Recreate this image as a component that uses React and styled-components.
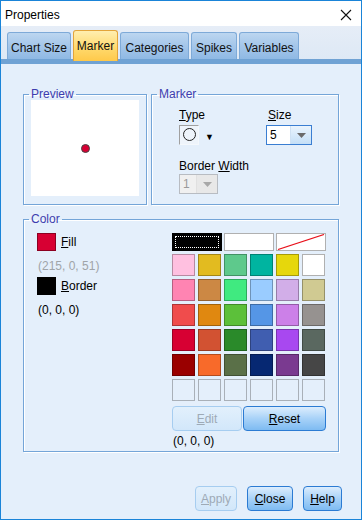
import styled, { createGlobalStyle } from "styled-components";

const GlobalStyle = createGlobalStyle`
  html, body {
    margin: 0;
    padding: 0;
    background: #ffffff;
  }
  body {
    font-family: "Liberation Sans", Arial, sans-serif;
    font-size: 12px;
    color: #000;
  }
`;

const tabs = [
  { label: "Chart Size", width: 64 },
  { label: "Marker", width: 45 },
  { label: "Categories", width: 69 },
  { label: "Spikes", width: 46 },
  { label: "Variables", width: 60 },
];

const palette = [
  "#ffc0e0", "#e2bb20", "#5ec98c", "#00b4a0", "#e6d70c", "#ffffff",
  "#ff84b2", "#cc8844", "#40ea80", "#9accff", "#d2aee8", "#d0ca92",
  "#f04c4c", "#e08810", "#5cc03a", "#5596e6", "#cc80e8", "#969290",
  "#d70033", "#d25232", "#2a8a2a", "#405eb0", "#a848f0", "#5a6860",
  "#9a0000", "#f86a2a", "#5a7048", "#062872", "#7a3a90", "#464646",
  null, null, null, null, null, null,
];

const App = () => {
  return (
    <>
      <GlobalStyle />
      <Window>
        <TitleBar>
          <Title>Properties</Title>
          <CloseIcon width="12" height="12" viewBox="0 0 12 12">
            <path d="M1 1 L11 11 M11 1 L1 11" stroke="#111" strokeWidth="1.1" />
          </CloseIcon>
        </TitleBar>

        <TabStrip>
          <TabRow>
            {tabs.map((t) => (
              <Tab key={t.label} $width={t.width} $active={t.label === "Marker"}>
                {t.label}
              </Tab>
            ))}
          </TabRow>
          <TabBar />
        </TabStrip>

        <Content>
          <TopRow>
            <PreviewBox>
              <Legend>Preview</Legend>
              <PreviewCanvas>
                <Dot />
              </PreviewCanvas>
            </PreviewBox>

            <MarkerBox>
              <Legend>Marker</Legend>
              <MarkerGrid>
                <FieldLabel><u>T</u>ype</FieldLabel>
                <FieldLabel $shift><u>S</u>ize</FieldLabel>
                <TypePicker>
                  <TypeBox>
                    <Circle />
                  </TypeBox>
                  <SmallArrow>▼</SmallArrow>
                </TypePicker>
                <Combo $width={46} $focused>
                  <ComboValue>5</ComboValue>
                  <ComboButton>
                    <svg width="9" height="5" viewBox="0 0 9 5">
                      <path d="M0 0 H9 L4.5 5 Z" fill="#6a6a6a" />
                    </svg>
                  </ComboButton>
                </Combo>
                <WidthLabel>Border <u>W</u>idth</WidthLabel>
                <WidthCombo>
                  <Combo $width={39} $disabled>
                    <ComboValue $disabled>1</ComboValue>
                    <ComboButton $disabled>
                      <svg width="9" height="5" viewBox="0 0 9 5">
                        <path d="M0 0 H9 L4.5 5 Z" fill="#a8a8a8" />
                      </svg>
                    </ComboButton>
                  </Combo>
                </WidthCombo>
              </MarkerGrid>
            </MarkerBox>
          </TopRow>

          <ColorBox>
            <Legend>Color</Legend>
            <ColorLayout>
              <ColorInfo>
                <SwatchRow>
                  <Swatch $color="#d70033" />
                  <span><u>F</u>ill</span>
                </SwatchRow>
                <RgbText $muted>(215, 0, 51)</RgbText>
                <SwatchRow>
                  <Swatch $color="#000000" />
                  <span><u>B</u>order</span>
                </SwatchRow>
                <RgbText>(0, 0, 0)</RgbText>
              </ColorInfo>

              <Palette>
                <SpecialRow>
                  <SpecialCell $bg="#000" $border="#000">
                    <FocusRing />
                  </SpecialCell>
                  <SpecialCell $bg="#fff" $border="#b0b0b0" />
                  <SpecialCell $bg="#fff" $border="#b0b0b0">
                    <svg width="48" height="16" viewBox="0 0 48 16">
                      <path d="M1 15.5 L47 0.5" stroke="#e8101a" strokeWidth="1.2" />
                    </svg>
                  </SpecialCell>
                </SpecialRow>
                <ColorGrid>
                  {palette.map((c, i) => (
                    <Cell key={i} $color={c} />
                  ))}
                </ColorGrid>
                <PaletteButtons>
                  <Button $width={70} $height={25} disabled>
                    <u>E</u>dit
                  </Button>
                  <Button $width={83} $height={25}>
                    <u>R</u>eset
                  </Button>
                </PaletteButtons>
                <PaletteRgb>(0, 0, 0)</PaletteRgb>
              </Palette>
            </ColorLayout>
          </ColorBox>

          <Footer>
            <Button $width={42} $height={25} disabled>
              <u>A</u>pply
            </Button>
            <Button $width={46} $height={25}>
              <u>C</u>lose
            </Button>
            <Button $width={39} $height={25}>
              <u>H</u>elp
            </Button>
          </Footer>
        </Content>
      </Window>
    </>
  );
};

export default App;

const Window = styled.div`
  width: 362px;
  height: 520px;
  box-sizing: border-box;
  border: 1px solid #1a84d8;
  display: flex;
  flex-direction: column;
  background: #e4effb;
  overflow: hidden;
`;

const TitleBar = styled.div`
  height: 25px;
  flex: none;
  background: #ffffff;
  display: flex;
  align-items: center;
  justify-content: space-between;
  padding: 0 9px 0 4px;
`;

const Title = styled.div`
  font-size: 12px;
  color: #000;
  margin-top: 2px;
`;

const CloseIcon = styled.svg`
  display: block;
  margin-top: 2px;
`;

const TabStrip = styled.div`
  flex: none;
  background: linear-gradient(#e6edf7, #dce8f5);
`;

const TabRow = styled.div`
  height: 33px;
  display: flex;
  align-items: flex-end;
  gap: 2px;
  padding-left: 6px;
  position: relative;
  z-index: 1;
`;

const Tab = styled.div`
  box-sizing: border-box;
  width: ${(p) => p.$width}px;
  height: ${(p) => (p.$active ? "31px" : "27px")};
  margin-bottom: ${(p) => (p.$active ? "-2px" : "0")};
  display: flex;
  align-items: center;
  justify-content: center;
  padding-top: ${(p) => (p.$active ? "0" : "3px")};
  font-size: 12px;
  color: #111;
  white-space: nowrap;
  border: 1px solid ${(p) => (p.$active ? "#e3a43a" : "#7eaad8")};
  border-bottom: none;
  border-radius: 3px 3px 0 0;
  background: ${(p) =>
    p.$active
      ? "linear-gradient(#ffeeb0, #ffd86a 60%, #ffc94a)"
      : "linear-gradient(#bcd6f0, #a4c6ea 50%, #8fb9e4)"};
`;

const TabBar = styled.div`
  height: 5px;
  background: #6fa2d4;
`;

const Content = styled.div`
  flex: 1;
  display: flex;
  flex-direction: column;
  padding: 23px 22px 0 22px;
`;

const TopRow = styled.div`
  display: flex;
  gap: 4px;
`;

const GroupBox = styled.fieldset`
  margin: 0;
  padding: 0;
  border: 1px solid #74a5d8;
  box-shadow: inset 1px 1px 0 #ffffff, 1px 1px 0 #ffffff;
  min-width: 0;
  box-sizing: border-box;
`;

const Legend = styled.legend`
  padding: 0 2px;
  margin-left: 5px;
  line-height: 14px;
  font-size: 12px;
  color: #3d3dae;
`;

const PreviewBox = styled(GroupBox)`
  width: 124px;
  height: 118px;
`;

const PreviewCanvas = styled.div`
  margin: -1px 7px 0 7px;
  height: 96px;
  background: #ffffff;
  display: flex;
  align-items: center;
  justify-content: center;
`;

const Dot = styled.div`
  width: 7px;
  height: 7px;
  border-radius: 50%;
  background: #d70033;
  border: 1px solid #444;
  margin-left: 1px;
  margin-top: 1px;
`;

const MarkerBox = styled(GroupBox)`
  width: 188px;
  height: 118px;
`;

const MarkerGrid = styled.div`
  display: grid;
  grid-template-columns: 87px 1fr;
  padding: 7px 0 0 27px;
`;

const FieldLabel = styled.div`
  line-height: 14px;
  font-size: 12px;
  margin-left: ${(p) => (p.$shift ? "2px" : "0")};
  margin-bottom: 2px;
`;

const TypePicker = styled.div`
  display: flex;
  align-items: center;
  gap: 6px;
`;

const TypeBox = styled.div`
  width: 20px;
  height: 20px;
  box-sizing: border-box;
  border: 1px solid #a0a0a0;
  border-right-color: #f4f8fc;
  border-bottom-color: #f4f8fc;
  background: #eef4fb;
  display: flex;
  align-items: center;
  justify-content: center;
`;

const Circle = styled.div`
  width: 13px;
  height: 13px;
  box-sizing: border-box;
  border: 1px solid #222;
  border-radius: 50%;
`;

const SmallArrow = styled.span`
  font-size: 9px;
  color: #000;
  margin-top: 4px;
`;

const Combo = styled.div`
  width: ${(p) => p.$width}px;
  height: 20px;
  box-sizing: border-box;
  display: flex;
  border: 1px solid
    ${(p) => (p.$focused ? "#3a7ed2" : p.$disabled ? "#b8bcc2" : "#9aa6b4")};
  background: ${(p) => (p.$disabled ? "#f0f0f0" : "#ffffff")};
  margin-top: 1px;
`;

const ComboValue = styled.div`
  flex: 1;
  padding-left: 3px;
  display: flex;
  align-items: center;
  font-size: 12px;
  color: ${(p) => (p.$disabled ? "#9a9a9a" : "#000")};
`;

const ComboButton = styled.div`
  width: 20px;
  display: flex;
  align-items: center;
  justify-content: center;
  background: ${(p) =>
    p.$disabled ? "#e8e8e8" : "linear-gradient(#eaf4fd, #c4dff7)"};
  border-left: 1px solid ${(p) => (p.$disabled ? "#e0e0e0" : "#cfe1f3")};
`;

const WidthLabel = styled.div`
  grid-column: 1 / 3;
  line-height: 14px;
  font-size: 12px;
  margin-top: 14px;
`;

const WidthCombo = styled.div`
  grid-column: 1 / 3;
`;

const ColorBox = styled(GroupBox)`
  margin-top: 7px;
  width: 316px;
  height: 240px;
`;

const ColorLayout = styled.div`
  display: flex;
  padding: 7px 0 0 13px;
`;

const ColorInfo = styled.div`
  width: 135px;
  display: flex;
  flex-direction: column;
`;

const SwatchRow = styled.div`
  display: flex;
  align-items: center;
  gap: 5px;
  font-size: 12px;
`;

const Swatch = styled.div`
  width: 19px;
  height: 18px;
  box-sizing: border-box;
  background: ${(p) => p.$color};
  border: 1px solid rgba(0, 0, 0, 0.35);
`;

const RgbText = styled.div`
  font-size: 12px;
  line-height: 14px;
  color: ${(p) => (p.$muted ? "#a0a4a8" : "#000")};
  margin: 8px 0 4px 1px;
`;

const Palette = styled.div`
  width: 154px;
  display: flex;
  flex-direction: column;
`;

const SpecialRow = styled.div`
  display: grid;
  grid-template-columns: repeat(3, 50px);
  gap: 2px;
`;

const SpecialCell = styled.div`
  height: 18px;
  box-sizing: border-box;
  background: ${(p) => p.$bg};
  border: 1px solid ${(p) => p.$border};
  display: flex;
  align-items: center;
  justify-content: center;
  overflow: hidden;

  svg {
    display: block;
  }
`;

const FocusRing = styled.div`
  width: 42px;
  height: 10px;
  border: 1px dotted #ffffff;
`;

const ColorGrid = styled.div`
  margin-top: 3px;
  display: grid;
  grid-template-columns: repeat(6, 23px);
  grid-auto-rows: 22px;
  gap: 3px;
`;

const Cell = styled.div`
  box-sizing: border-box;
  background: ${(p) => p.$color || "transparent"};
  border: 1px solid ${(p) => (p.$color ? "rgba(0, 0, 0, 0.28)" : "#a9b0b8")};
  ${(p) => p.$color === "#ffffff" && "border-color: #b0b0b0;"}
`;

const PaletteButtons = styled.div`
  margin-top: 5px;
  display: flex;
  gap: 1px;
`;

const Button = styled.button`
  width: ${(p) => p.$width}px;
  height: ${(p) => p.$height}px;
  box-sizing: border-box;
  padding: 0;
  font-family: "Liberation Sans", Arial, sans-serif;
  font-size: 12px;
  color: #000;
  border: 1px solid #2b7bd3;
  border-radius: 4px;
  background: linear-gradient(#dcedfd, #a8d2f8 50%, #7ebbf2);

  &:disabled {
    color: #9eaab6;
    border-color: #a6cdf0;
    background: linear-gradient(#e2f0fc, #d2e7fa);
  }
`;

const PaletteRgb = styled.div`
  font-size: 12px;
  line-height: 14px;
  margin-top: 3px;
  margin-left: 1px;
`;

const Footer = styled.div`
  margin-top: 34px;
  margin-right: -3px;
  display: flex;
  justify-content: flex-end;
  gap: 10px;
`;
